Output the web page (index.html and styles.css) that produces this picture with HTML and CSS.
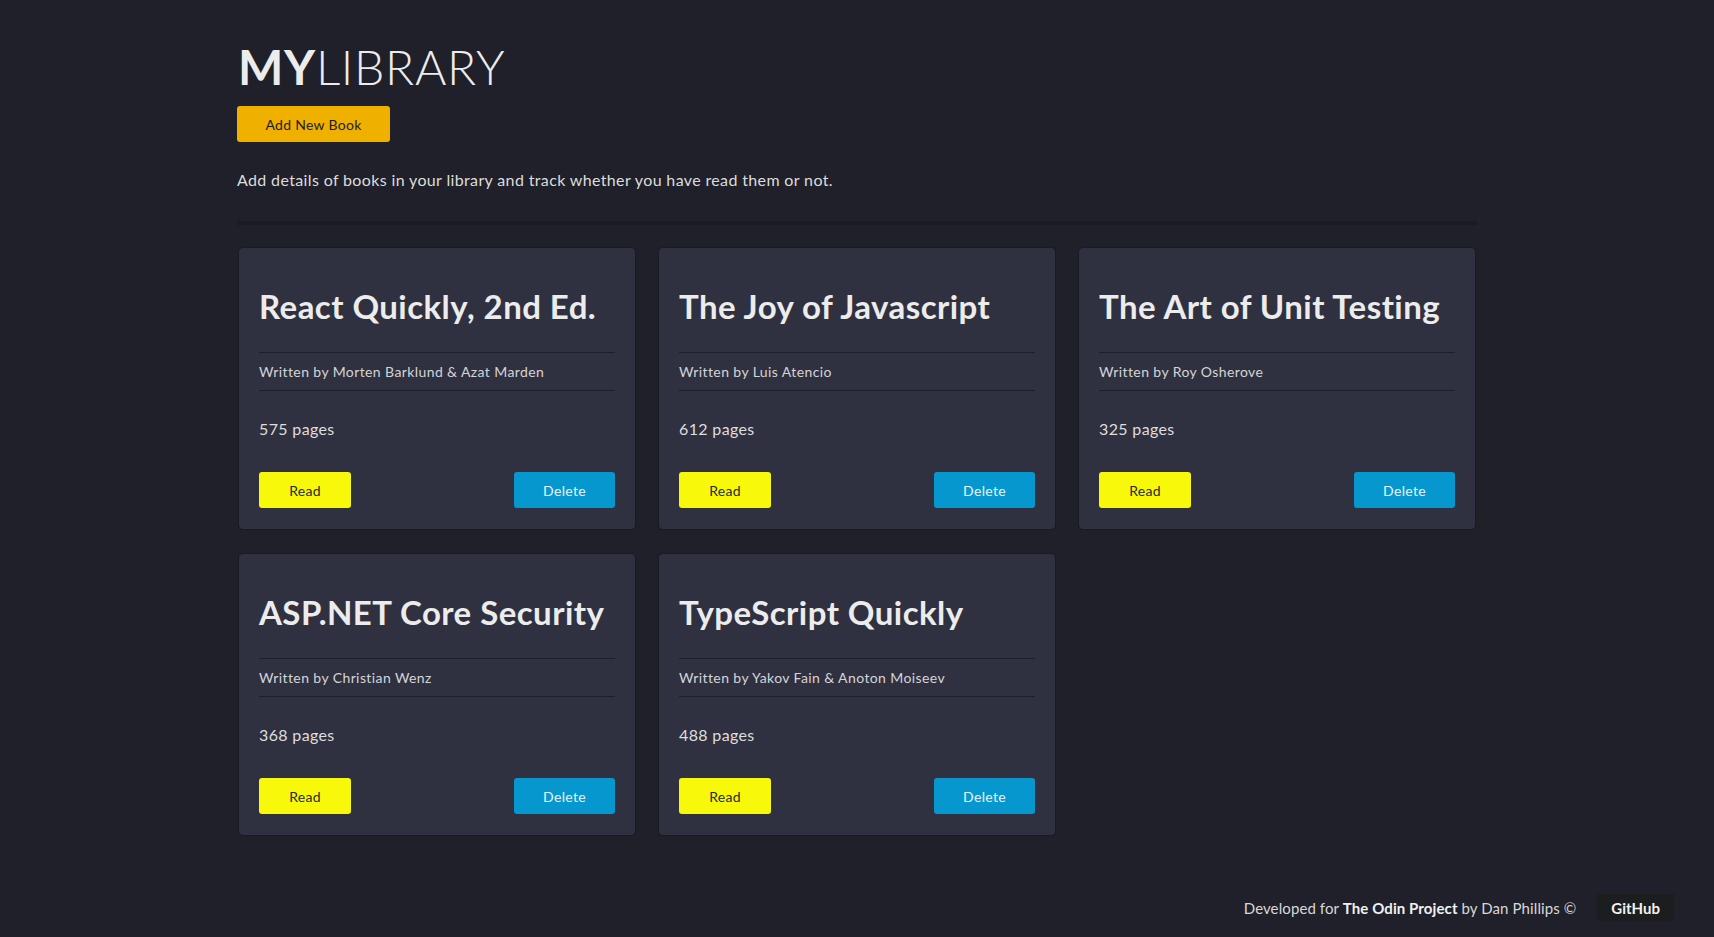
FILE: index.html
```html
<!DOCTYPE html>
<html lang="en">
<head>
<meta charset="utf-8">
<title>My Library</title>
<link rel="stylesheet" href="styles.css">
</head>
<body>
<div class="page">
  <div class="container">
    <header class="header">
      <h1 class="logo"><span class="logo-bold">MY</span>LIBRARY</h1>
      <button class="btn btn-add">Add New Book</button>
      <p class="intro">Add details of books in your library and track whether you have read them or not.</p>
      <div class="divider"></div>
    </header>
    <main class="grid">
      <article class="card">
        <h2 class="card-title">React Quickly, 2nd Ed.</h2>
        <p class="card-author">Written by Morten Barklund &amp; Azat Marden</p>
        <p class="card-pages">575 pages</p>
        <div class="card-actions">
          <button class="btn btn-read">Read</button>
          <button class="btn btn-delete">Delete</button>
        </div>
      </article>
      <article class="card">
        <h2 class="card-title">The Joy of Javascript</h2>
        <p class="card-author">Written by Luis Atencio</p>
        <p class="card-pages">612 pages</p>
        <div class="card-actions">
          <button class="btn btn-read">Read</button>
          <button class="btn btn-delete">Delete</button>
        </div>
      </article>
      <article class="card">
        <h2 class="card-title">The Art of Unit Testing</h2>
        <p class="card-author">Written by Roy Osherove</p>
        <p class="card-pages">325 pages</p>
        <div class="card-actions">
          <button class="btn btn-read">Read</button>
          <button class="btn btn-delete">Delete</button>
        </div>
      </article>
      <article class="card">
        <h2 class="card-title">ASP.NET Core Security</h2>
        <p class="card-author">Written by Christian Wenz</p>
        <p class="card-pages">368 pages</p>
        <div class="card-actions">
          <button class="btn btn-read">Read</button>
          <button class="btn btn-delete">Delete</button>
        </div>
      </article>
      <article class="card">
        <h2 class="card-title">TypeScript Quickly</h2>
        <p class="card-author">Written by Yakov Fain &amp; Anoton Moiseev</p>
        <p class="card-pages">488 pages</p>
        <div class="card-actions">
          <button class="btn btn-read">Read</button>
          <button class="btn btn-delete">Delete</button>
        </div>
      </article>
    </main>
  </div>
  <footer class="footer">
    <span class="footer-text">Developed for <strong>The Odin Project</strong> by Dan Phillips ©</span>
    <a class="github" href="#">GitHub</a>
  </footer>
</div>
</body>
</html>
```
FILE: styles.css
```css
* { box-sizing: border-box; }

html, body {
  margin: 0;
  padding: 0;
}

body {
  background: #1f2029;
  color: #e6e6e6;
  font-family: "Lato", "Open Sans", sans-serif;
}

.page {
  min-height: 100vh;
  display: flex;
  flex-direction: column;
}

.container {
  width: 1240px;
  margin: 0 auto;
}

.header {
  display: flex;
  flex-direction: column;
  align-items: flex-start;
}

.logo {
  margin: 38px 0 0 1px;
  font-size: 48px;
  font-weight: 300;
  line-height: 58px;
  color: #ececec;
  letter-spacing: 0.7px;
}

.logo-bold {
  font-weight: 700;
}

.btn {
  font-family: inherit;
  border: none;
  border-radius: 3px;
  height: 36px;
  font-size: 14px;
  letter-spacing: 0.3px;
  cursor: pointer;
}

.btn-add {
  margin-top: 10px;
  width: 153px;
  background: #efb000;
  color: #1c1c1c;
}

.intro {
  margin: 28px 0 0;
  font-size: 16px;
  line-height: 19px;
  color: #dcdcdc;
  letter-spacing: 0.36px;
}

.divider {
  align-self: stretch;
  margin-top: 32px;
  height: 4px;
  background: #1a1b22;
}

.grid {
  margin-top: 23px;
  padding: 0 2px;
  display: grid;
  grid-template-columns: repeat(3, 396px);
  column-gap: 24px;
  row-gap: 25px;
}

.card {
  background: #303140;
  border-radius: 4px;
  padding: 20px 20px 21px;
  box-shadow: 0 0 2px rgba(0, 0, 0, 0.6);
  height: 281px;
  display: flex;
  flex-direction: column;
}

.card-title {
  margin: 18px 0 0;
  font-size: 33px;
  line-height: 40px;
  font-weight: 700;
  color: #ececec;
  letter-spacing: 0.45px;
  white-space: nowrap;
}

.card-author {
  margin: 26px 0 0;
  padding: 10px 0;
  border-top: 1px solid #1e1f28;
  border-bottom: 1px solid #1e1f28;
  font-size: 14px;
  line-height: 17px;
  color: #d4d4d8;
  letter-spacing: 0.4px;
}

.card-pages {
  margin: 28px 0 0;
  font-size: 16px;
  line-height: 19px;
  color: #dedede;
  letter-spacing: 0.35px;
}

.card-actions {
  margin-top: auto;
  display: flex;
  justify-content: space-between;
}

.btn-read {
  width: 92px;
  background: #f8f80a;
  color: #2a2a2a;
}

.btn-delete {
  width: 101px;
  background: #0797cf;
  color: #e8f4fa;
}

.footer {
  margin-top: auto;
  display: flex;
  justify-content: flex-end;
  align-items: center;
  gap: 21px;
  padding: 0 40px 16px 0;
}

.footer-text {
  font-size: 15px;
  color: #d8d8d8;
  letter-spacing: 0.1px;
}

.footer-text strong {
  color: #f0f0f0;
}

.github {
  display: inline-flex;
  align-items: center;
  height: 27px;
  padding: 0 14px;
  background: #1c1d1e;
  color: #f2f2f2;
  font-weight: 700;
  font-size: 15px;
  text-decoration: none;
}
```
